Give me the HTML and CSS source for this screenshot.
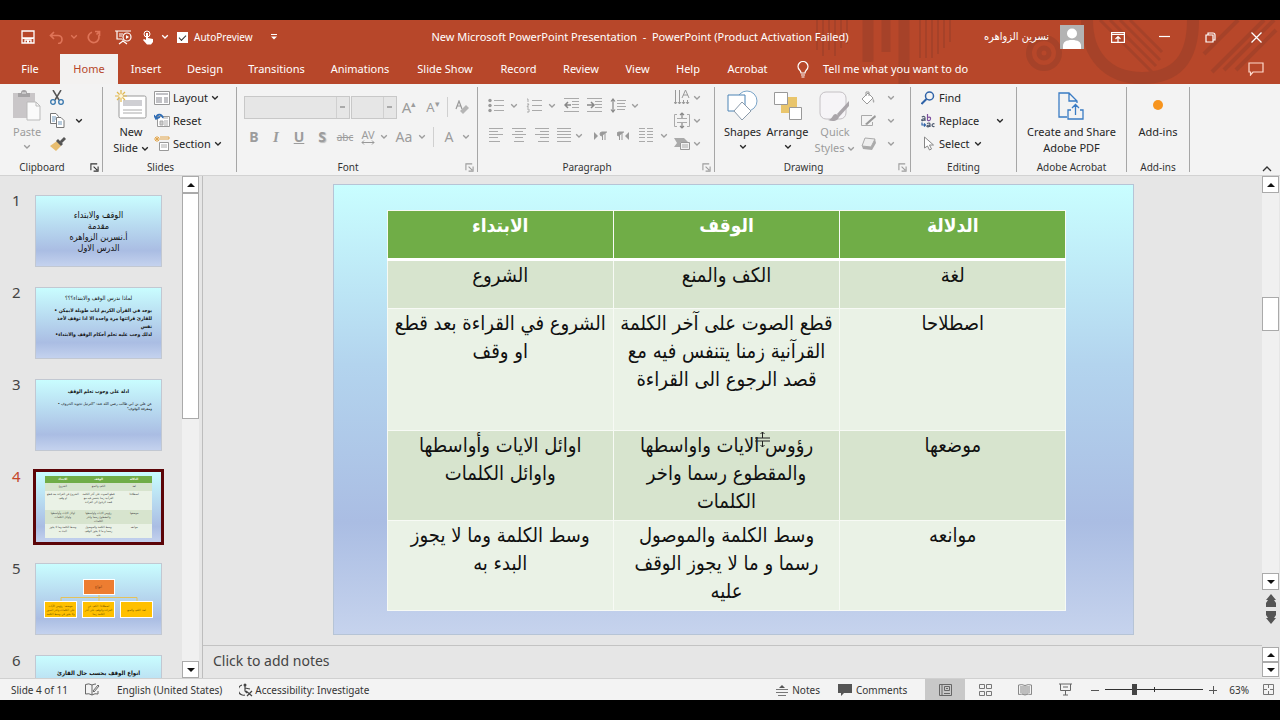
FILE: index.html
```html
<!DOCTYPE html>
<html lang="en">
<head>
<meta charset="utf-8">
<title>New Microsoft PowerPoint Presentation</title>
<link rel="stylesheet" href="styles.css">
</head>
<body>
<svg width="0" height="0" class="defs" aria-hidden="true">
  <symbol id="chev" viewBox="0 0 8 6"><path d="M1.2 1.2 4 4 6.800 1.200" fill="none" stroke="currentColor" stroke-width="1.300"/></symbol>
  <symbol id="launch" viewBox="0 0 10 10"><path d="M1 8V1h7M4 4l4 4M9 4v5H4" fill="none" stroke="currentColor" stroke-width="1.200"/></symbol>
  <symbol id="up" viewBox="0 0 8 4"><path d="M0 4 4 0l4 4z" fill="currentColor"/></symbol>
  <symbol id="down" viewBox="0 0 8 4"><path d="M0 0h8L4 4z" fill="currentColor"/></symbol>
</svg>

<header class="top">
  <svg class="art" viewBox="0 0 480 64" width="480" height="64" aria-hidden="true">
    <g fill="none" stroke="#9b4029">
      <path d="M17 0v30M23 0v36M29 0v30M35 0v36M41 0v28M47 0v24" stroke-width="2"/>
      <path d="M68 0v42M104 0v64" stroke-width="11"/><path d="M86 0v32" stroke-width="9"/>
      <path d="M120 0v38M126 0v38M132 0v38M138 0v34M144 0v28M150 0v22" stroke-width="2"/>
      <circle cx="244" cy="33" r="15" stroke-width="6"/><circle cx="244" cy="33" r="5" stroke-width="5"/>
      <path d="M287 0c0 35 20 58 55 58s51-20 51-58" stroke-width="12"/>
      <path d="m300 0 52 52M310 0l46 46M320 0l40 40M330 0l32 32" stroke-width="3"/>
      <path d="m404 34 34-34M412 52l52-52M424 50l50-50M436 50l40-40" stroke-width="4"/>
    </g>
  </svg>
  <div class="titlebar">
    <div class="qat">
      <button aria-label="Save"><svg width="14" height="14" viewBox="0 0 14 14"><path d="M1 1h12v12H1zM1 8h12M4 13v-3h6v3" fill="none" stroke="#fff" stroke-width="1.300"/><path d="M6 10h2v3H6zM2 8h10v1H2z" fill="#fff"/></svg></button>
      <button aria-label="Undo"><svg width="15" height="13" viewBox="0 0 15 13"><path d="M5 1 1.500 4.500 5 8M1.500 4.500H9a4 4 0 0 1 0 8" fill="none" stroke="#df7458" stroke-width="1.700"/></svg></button>
      <button aria-label="Undo list" class="dim"><svg width="8" height="6"><use href="#chev"/></svg></button>
      <button aria-label="Redo"><svg width="14" height="14" viewBox="0 0 14 14"><path d="M8 1.500h4.500V6M12 2 9.500 4.500M5 2.200a5.300 5.300 0 1 0 6.500 3" fill="none" stroke="#df7458" stroke-width="1.700"/></svg></button>
      <button aria-label="From beginning"><svg width="17" height="15" viewBox="0 0 17 15"><path d="M0 1h16M2 1v8h5M4 4h4M4 6h3M8 9v3M4 14l4-3 4 3" fill="none" stroke="#fff" stroke-width="1.200"/><circle cx="12" cy="7" r="4" fill="#b7472a" stroke="#fff" stroke-width="1.200"/><path d="m11 5 3 2-3 2z" fill="#fff"/></svg></button>
      <button aria-label="Touch mode"><svg width="13" height="15" viewBox="0 0 13 15"><circle cx="5" cy="4" r="3" fill="none" stroke="#fff"/><path d="M4 3h2v5l5 1v3l-2 2.500H5L1 10l1-1 2 1z" fill="#fff"/></svg></button>
      <button aria-label="Touch mode list"><svg width="8" height="6"><use href="#chev"/></svg></button>
      <label class="auto"><input type="checkbox" checked><span>AutoPreview</span></label>
      <button aria-label="Customize toolbar"><svg width="6" height="6" viewBox="0 0 6 6"><path d="M0 .5h6" stroke="#fff"/><path d="M0 2.500h6L3 5.500z" fill="#fff"/></svg></button>
    </div>
    <h1>New Microsoft PowerPoint Presentation&nbsp; -&nbsp; PowerPoint (Product Activation Failed)</h1>
    <div class="account">
      <span dir="rtl" lang="ar">نسرين الزواهره</span>
      <svg width="24" height="24" viewBox="0 0 24 24"><path d="M0 0h24v24H0z" fill="#b3b3b3"/><circle cx="12" cy="8.500" r="5" fill="#fff"/><path d="M3 24v-3c0-4 3-6 9-6s9 2 9 6v3z" fill="#fff"/></svg>
      <button aria-label="Ribbon display options"><svg width="14" height="11" viewBox="0 0 14 11"><path d="M.6.600h12.800v9.800H.6zM.6 2.500h12.800M7 10V5M4.500 7 7 4.500 9.500 7" fill="none" stroke="#fff" stroke-width="1.200"/></svg></button>
      <button aria-label="Minimize"><svg width="11" height="11" viewBox="0 0 11 11"><path d="M0 4.500h11" stroke="#fff" stroke-width="1.200"/></svg></button>
      <button aria-label="Restore"><svg width="11" height="11" viewBox="0 0 11 11"><path d="M1 3h7v7H1zM3 3V1h5q2 0 2 2v5H8" fill="none" stroke="#fff" stroke-width="1.200"/></svg></button>
      <button aria-label="Close"><svg width="11" height="11" viewBox="0 0 11 11"><path d="m.5.500 10 10m0-10-10 10" stroke="#fff" stroke-width="1.300"/></svg></button>
    </div>
  </div>
  <nav class="tabs">
    <button>File</button><button class="active">Home</button><button>Insert</button><button>Design</button><button>Transitions</button><button>Animations</button><button>Slide Show</button><button>Record</button><button>Review</button><button>View</button><button>Help</button><button>Acrobat</button>
    <button class="tell"><svg width="12" height="17" viewBox="0 0 12 17"><path d="M4 12c0-3-3-3-3-6.500a5 5 0 0 1 10 0C11 9 8 9 8 12zM4 14h4M4.500 16h3" fill="none" stroke="#fff" stroke-width="1.200"/></svg>Tell me what you want to do</button>
    <button class="cmt" aria-label="Comments"><svg width="16" height="14" viewBox="0 0 16 14"><path d="M1 1h14v9H5l-2.500 3v-3H1z" fill="none" stroke="#ffd9cc" stroke-width="1.200"/></svg></button>
  </nav>
</header>

<section class="ribbon">
  <div class="group g-clip">
    <div class="body">
      <button class="big off"><svg width="28" height="32" viewBox="0 0 28 32"><path d="M0 3h22v25H0z" fill="#c9c6c8"/><path d="M5 3h3q0-3 3-3t3 3h3v4H5z" fill="#a5a3a5"/><path d="M9 3h4" stroke="#eee"/><path d="M14 12h9l4 4v14H14z" fill="#fafafa" stroke="#bbb"/><path d="M23 12v4h4" fill="none" stroke="#bbb"/></svg><span>Paste</span><svg class="chev" width="8" height="6"><use href="#chev"/></svg></button>
      <div class="stack">
        <button aria-label="Cut"><svg width="14" height="15" viewBox="0 0 14 15"><path d="m3 0 6 10M11 0 5 10" stroke="#555" stroke-width="1.500"/><g fill="none" stroke="#3676ad" stroke-width="1.300"><circle cx="3" cy="12" r="2.300"/><circle cx="11" cy="12" r="2.300"/></g></svg></button>
        <button aria-label="Copy"><svg width="15" height="15" viewBox="0 0 15 15"><g fill="#fff" stroke="#777"><path d="M.5.500H6l2.500 3v7h-8z"/><path d="M6.500 4.500H11l3 3v7H6.500z"/></g><path d="M2 4h4M2 6h4M2 8h3M8 9h4M8 11h4" stroke="#6f96b9"/></svg></button>
        <button aria-label="Format painter"><svg width="16" height="14" viewBox="0 0 16 14"><path d="m0 9 7-5 4 5-5 5z" fill="#e7bd70"/><path d="m6 4 2-2 5 5-2 2zM10 4l4-4 2 2-4 4z" fill="#555"/></svg></button>
      </div>
      <button aria-label="Copy options"><svg width="8" height="6"><use href="#chev"/></svg></button>
    </div>
    <footer>Clipboard<svg class="launch" width="9" height="9"><use href="#launch"/></svg></footer>
  </div>

  <div class="group g-slides">
    <div class="body">
      <button class="big"><svg width="32" height="32" viewBox="0 0 32 32"><rect x="4" y="6" width="27" height="22" rx="1.500" fill="#fff" stroke="#999"/><path d="M8 10h19v6H8z" fill="#cfcfd3"/><path d="M8 20h19M8 23h19" stroke="#aaa"/><path d="M6 0v12M0 6h12M2 2l8 8M10 2l-8 8" stroke="#e3b94c" stroke-width="1.200"/><circle cx="6" cy="6" r="2" fill="#fff6d8"/></svg><span>New<br>Slide <svg width="8" height="6"><use href="#chev"/></svg></span></button>
      <div class="stack">
        <button><svg width="16" height="14" viewBox="0 0 16 14"><path d="M.5.500h15v13H.5z" fill="#fff" stroke="#999"/><path d="M2 2h12v2H2zM2 6h6v6H2zM10 6h4v6h-4z" fill="#c2c2c6"/></svg>Layout <svg width="8" height="6"><use href="#chev"/></svg></button>
        <button><svg width="16" height="15" viewBox="0 0 16 15"><path d="M3.500 3.500h12v10h-12z" fill="#fff" stroke="#999"/><path d="M9 5h5M6 8h3v4H6zM10 8h4M10 10h4M10 12h4" stroke="#aaa" fill="#ccc"/><path d="M9 5C8 1 3 0 2 5M0 2l2 4 4-2" fill="none" stroke="#2f6db5" stroke-width="1.600"/></svg>Reset</button>
        <button><svg width="16" height="15" viewBox="0 0 16 15"><path d="M5.500 6.500h9v8h-9z" fill="#fff" stroke="#999"/><path d="M7 9h6M7 11h6" stroke="#aaa"/><path d="M6 1h9v2H6M3 0v6M0 3h6M1 1l4 4M5 1 1 5" fill="none" stroke="#e2a64c"/></svg>Section <svg width="8" height="6"><use href="#chev"/></svg></button>
      </div>
    </div>
    <footer>Slides</footer>
  </div>

  <div class="group g-font off">
    <div class="body rows">
      <div class="frow1">
        <select aria-label="Font"><option></option></select>
        <select aria-label="Font size"><option></option></select>
        <button aria-label="Increase font size" class="ga">A<sup>▴</sup></button>
        <button aria-label="Decrease font size" class="ga sm">A<sup>▾</sup></button>
        <i class="sep"></i>
        <button aria-label="Clear formatting"><svg width="14" height="15" viewBox="0 0 14 15"><path d="m1 9 3-8 3 8M2 6h4" fill="none" stroke="#999" stroke-width="1.200"/><path d="m5 11 6-6 3 3-6 6z" fill="#b5b5b5"/></svg></button>
      </div>
      <div class="frow2">
        <button><b>B</b></button><button class="ital"><b>I</b></button><button><b><u>U</u></b></button><button class="shadow"><b>S</b></button><button class="abc"><s>abc</s></button>
        <button class="av" aria-label="Character spacing">AV<svg width="14" height="5" viewBox="0 0 14 5"><path d="M1 2.500h12M3 .5l-2 2 2 2M11 .5l2 2-2 2" fill="none" stroke="#999"/></svg></button>
        <svg width="8" height="6"><use href="#chev"/></svg><button>Aa</button><svg width="8" height="6"><use href="#chev"/></svg><i class="sep"></i><button class="fc">A</button><svg width="8" height="6"><use href="#chev"/></svg>
      </div>
    </div>
    <footer>Font<svg class="launch" width="9" height="9"><use href="#launch"/></svg></footer>
  </div>

  <div class="group g-para off">
    <div class="body">
      <div class="rows">
        <div class="prow1">
          <button aria-label="Bullets"><svg width="16" height="15" viewBox="0 0 16 15"><path d="M6 2.500h10M6 7.500h10M6 12.500h10" stroke="#aaa"/><g fill="#999"><circle cx="2" cy="2.500" r="1.700"/><circle cx="2" cy="7.500" r="1.700"/><circle cx="2" cy="12.500" r="1.700"/></g></svg></button><svg width="8" height="6"><use href="#chev"/></svg>
          <button aria-label="Numbering"><svg width="16" height="15" viewBox="0 0 16 15"><path d="M6 2.500h10M6 7.500h10M6 12.500h10M1 1h1v3M1 6h2l-2 3h2M1 11h2v3H1" fill="none" stroke="#aaa"/></svg></button><svg width="8" height="6"><use href="#chev"/></svg>
          <button aria-label="Decrease indent"><svg width="16" height="15" viewBox="0 0 16 15"><path d="M0 .5h15M8 3.500h7M8 6.500h7M8 9.500h7M0 13.500h15" stroke="#aaa"/><path d="M4 4 1 7l3 3M1 7h6" fill="none" stroke="#888" stroke-width="1.500"/></svg></button>
          <button aria-label="Increase indent"><svg width="16" height="15" viewBox="0 0 16 15"><path d="M0 .5h15M8 3.500h7M8 6.500h7M8 9.500h7M0 13.500h15" stroke="#aaa"/><path d="m4 4 3 3-3 3M0 7h6" fill="none" stroke="#888" stroke-width="1.500"/></svg></button>
          <button aria-label="Line spacing"><svg width="16" height="15" viewBox="0 0 16 15"><path d="M7 2.500h9M7 5.500h8M7 8.500h9M7 11.500h8" stroke="#aaa"/><path d="M3 1v13M1 3.500 3 1l2 2.500M1 11.500 3 14l2-2.500" fill="none" stroke="#888" stroke-width="1.200"/></svg></button><svg width="8" height="6"><use href="#chev"/></svg>
        </div>
        <div class="prow2">
          <button aria-label="Align left"><svg width="14" height="15" viewBox="0 0 14 15"><path d="M0 .5h14M0 3.500h9M0 6.500h14M0 9.500h9M0 13.500h11" stroke="#aaa"/></svg></button>
          <button aria-label="Center"><svg width="14" height="15" viewBox="0 0 14 15"><path d="M0 .5h14M3 3.500h8M0 6.500h14M3 9.500h8M2 13.500h10" stroke="#aaa"/></svg></button>
          <button aria-label="Align right"><svg width="14" height="15" viewBox="0 0 14 15"><path d="M0 .5h14M5 3.500h9M0 6.500h14M5 9.500h9M3 13.500h11" stroke="#aaa"/></svg></button>
          <button aria-label="Justify"><svg width="14" height="15" viewBox="0 0 14 15"><path d="M0 .5h14M0 3.500h14M0 6.500h14M0 9.500h14M0 13.500h14" stroke="#aaa"/></svg></button><svg width="8" height="6"><use href="#chev"/></svg>
          <button aria-label="Left to right"><svg width="13" height="10" viewBox="0 0 13 10"><path d="m0 1 4 4-4 4z" fill="#999"/><path d="M8.500 1v8M11 1v8M13 1H8a2 2 0 0 0 0 4" fill="#999" stroke="#999"/></svg></button>
          <button aria-label="Right to left"><svg width="13" height="10" viewBox="0 0 13 10"><path d="m12 1-4 4 4 4z" fill="#999"/><path d="M2.500 1v8M5 1v8M7 1H2a2 2 0 0 0 0 4" fill="#999" stroke="#999"/></svg></button>
          <button aria-label="Columns"><svg width="14" height="15" viewBox="0 0 14 15"><path d="M0 .5h6M8 .5h6M0 3.500h6M8 3.500h6M0 6.500h6M8 6.500h6M0 9.500h6M8 9.500h6M0 13.500h6M8 13.500h6" stroke="#aaa"/></svg></button><svg width="8" height="6"><use href="#chev"/></svg>
        </div>
      </div>
      <div class="pairs">
        <button aria-label="Text direction"><svg width="16" height="17" viewBox="0 0 16 17"><path d="M1.500 1v14M5.500 1v14M9.500 11v4M13.500 11v4M0 13l1.500 2L3 13M4 13l1.500 2L7 13M8 13l1.500 2 1.500-2M12 13l1.500 2 1.500-2M8 9l3.500-8L15 9M9 6h5" fill="none" stroke="#999"/></svg><svg width="8" height="6"><use href="#chev"/></svg></button>
        <button aria-label="Align text"><svg width="16" height="17" viewBox="0 0 16 17"><path d="M3 2.500H.5v12H3M13 2.500h2.500v12H13M3 6.500h10M3 10.500h10" fill="none" stroke="#aaa"/><path d="M8 1v5M8 11v5M6 3l2-2 2 2M6 14l2 2 2-2" fill="none" stroke="#888" stroke-width="1.200"/></svg><svg width="8" height="6"><use href="#chev"/></svg></button>
        <button aria-label="SmartArt"><svg width="16" height="14" viewBox="0 0 16 14"><path d="M0 1h10l4 4H6v5H0l3-4z" fill="#aaa"/><path d="M6.500 5.500h9v7h-9z" fill="#f2f2f2" stroke="#999"/><path d="M8 8h6M8 10h6" stroke="#aaa"/></svg><svg width="8" height="6"><use href="#chev"/></svg></button>
      </div>
    </div>
    <footer>Paragraph<svg class="launch" width="9" height="9"><use href="#launch"/></svg></footer>
  </div>

  <div class="group g-draw">
    <div class="body">
      <button class="big"><svg width="32" height="32" viewBox="0 0 32 32"><g fill="#fff"><circle cx="20" cy="11" r="10" stroke="#7aa5c9"/><path d="M1 5h17v16H1z" stroke="#4c84b5"/><path d="m15 12 9 9-9 9-8-9z" stroke="#8a9aaa"/></g></svg><span>Shapes</span><svg class="chev" width="8" height="6"><use href="#chev"/></svg></button>
      <button class="big"><svg width="30" height="32" viewBox="0 0 30 32"><path d="M8 7h16v16H8z" fill="#e9c56c"/><g fill="#fff" stroke="#999"><path d="M1.500 2.500h13v12h-13zM16.500 17.500h12v12h-12z"/></g></svg><span>Arrange</span><svg class="chev" width="8" height="6"><use href="#chev"/></svg></button>
      <button class="big off"><svg width="32" height="32" viewBox="0 0 32 32"><rect x="1" y="2" width="26" height="27" rx="6" fill="#f6f4f7" stroke="#c4c0c4"/><path d="m30 11-12 13 2 3 10-11z" fill="#aaa5aa"/><path d="M17 24c-4 0-3 5-8 6 5 2 11 1 11-4z" fill="#aaa5aa"/></svg><span>Quick<br>Styles <svg width="8" height="6"><use href="#chev"/></svg></span></button>
      <div class="pairs off">
        <button aria-label="Shape fill"><svg width="14" height="14" viewBox="0 0 14 14"><path d="m1 8 6-6 5 5-6 6zM5 5V1h3v4" fill="#fff" stroke="#999"/><path d="M12 7q2 3 1 5-2-1-1-5" fill="#aaa"/></svg><svg width="8" height="6"><use href="#chev"/></svg></button>
        <button aria-label="Shape outline"><svg width="16" height="14" viewBox="0 0 16 14"><path d="M11 1.500H.5v10h11V8" fill="none" stroke="#aaa"/><path d="m4 10 10-9 1 2-9 8z" fill="#999"/></svg><svg width="8" height="6"><use href="#chev"/></svg></button>
        <button aria-label="Shape effects"><svg width="16" height="14" viewBox="0 0 16 14"><path d="m4 1 10 1-4 8-9-1z" fill="#eee" stroke="#aaa"/><path d="m1 9 9 1 4-8 1 4-4 7-9-1z" fill="#aaa"/></svg><svg width="8" height="6"><use href="#chev"/></svg></button>
      </div>
    </div>
    <footer>Drawing<svg class="launch dimmed" width="9" height="9"><use href="#launch"/></svg></footer>
  </div>

  <div class="group g-edit">
    <div class="body">
      <div class="stack">
        <button><svg width="14" height="14" viewBox="0 0 14 14"><circle cx="8.500" cy="5" r="4" fill="none" stroke="#2f63a8" stroke-width="1.500"/><path d="m5.500 8-5 5" stroke="#2f63a8" stroke-width="2"/></svg>Find</button>
        <button><svg width="14" height="14" viewBox="0 0 14 14"><g fill="none" stroke="#4d5a70" stroke-width="1.200"><path d="M.8 3Q4 1.500 4 4v3M4 4.500C0 4.500 0 7 2 6.500L4 5.500"/><path d="M6.500 0v6.500M6.500 3.500q3.500-1 3 1.500t-3 1.200" stroke="#7d4f9e"/><path d="M1 8.500v2.500h3M3 9.500 4.500 11 3 12.500" stroke="#2f63a8"/><path d="M6 9.500q3-1.300 3 .8V13M9 11c-4 0-3.500 2-2 1.800L9 12M13.500 10C10.500 8.500 10 13.500 13.500 12.500"/></g></svg>Replace</button>
        <button><svg width="14" height="15" viewBox="0 0 14 15"><path d="M3.500 1v11l3-2 2 4 2-1-2-4h4z" fill="#fff" stroke="#888"/></svg>Select <svg width="8" height="6"><use href="#chev"/></svg></button>
      </div>
      <button aria-label="Replace options"><svg width="8" height="6"><use href="#chev"/></svg></button>
    </div>
    <footer>Editing</footer>
  </div>

  <div class="group g-pdf">
    <div class="body"><button class="big"><svg width="26" height="32" viewBox="0 0 26 32"><path d="M9 27H1V3h10l8 8v2M11 3v8h8M13 20h-3v9h15v-9h-3M17.500 25V15M14 18l3.500-3.500L21 18" fill="none" stroke="#3a7cc4" stroke-width="1.300"/></svg><span>Create and Share<br>Adobe PDF</span></button></div>
    <footer>Adobe Acrobat</footer>
  </div>
  <div class="group g-add">
    <div class="body"><button class="big"><svg width="26" height="32" viewBox="0 0 26 32"><circle cx="13" cy="15" r="5" fill="#f7941d"/></svg><span>Add-ins</span></button></div>
    <footer>Add-ins</footer>
  </div>
  <button class="collapse" aria-label="Collapse ribbon"><svg width="10" height="6" viewBox="0 0 10 6"><path d="m1 5 4-4 4 4" fill="none" stroke="#333" stroke-width="1.300"/></svg></button>
</section>

<main class="work">
  <aside class="thumbs">
    <div class="item"><span>1</span><div class="thumb t1" dir="rtl" lang="ar">الوقف والابتداء<br>مقدمة<br>أ.نسرين الزواهره<br>الدرس الاول</div></div>
    <div class="item"><span>2</span><div class="thumb t2" dir="rtl" lang="ar"><h3>لماذا ندرس الوقف والابتداء؟؟؟</h3><ul><li>يوجد في القرآن الكريم ايات طويلة لايمكن •<br>للقارئ قرائتها مرة واحدة الا اذا توقف لأخذ<br>نفس</li><li>لذلك وجب عليه تعلم أحكام الوقف والابتداء•</li></ul></div></div>
    <div class="item"><span>3</span><div class="thumb t3" dir="rtl" lang="ar"><h3>ادلة على وجوب تعلم الوقف</h3><ul><li>عن علي بن ابي طالب رضي الله عنه: "الترتيل تجويد الحروف •<br>ومعرفة الوقوف"</li></ul></div></div>
    <div class="item on"><span>4</span><div class="thumb t4" dir="rtl" lang="ar">
      <table class="mini">
        <tr><th>الدلالة</th><th>الوقف</th><th>الابتداء</th></tr>
        <tr><td>لغة</td><td>الكف والمنع</td><td>الشروع</td></tr>
        <tr><td>اصطلاحا</td><td>قطع الصوت على آخر الكلمة<br>القرآنية زمنا يتنفس فيه مع<br>قصد الرجوع الى القراءة</td><td>الشروع في القراءة بعد قطع<br>او وقف</td></tr>
        <tr><td>موضعها</td><td>رؤوس الايات واواسطها<br>والمقطوع رسما واخر<br>الكلمات</td><td>اوائل الايات وأواسطها<br>واوائل الكلمات</td></tr>
        <tr><td>موانعه</td><td>وسط الكلمة والموصول<br>رسما و ما لا يجوز الوقف<br>عليه</td><td>وسط الكلمة وما لا يجوز<br>البدء به</td></tr>
      </table></div></div>
    <div class="item"><span>5</span><div class="thumb t5" dir="rtl" lang="ar">
      <div class="root">انواع</div>
      <svg width="78" height="6" viewBox="0 0 78 6"><path d="M1 6V2.500h76V6M39 0v6" fill="none" stroke="#e3c25b"/></svg>
      <div class="leaves"><div>لغة: الكف والمنع</div><div>اصطلاحا: الكف عن<br>القراءة والوقف على آخر<br>الكلمة زمنا</div><div>موضعه: رؤوس الآيات<br>على الكلمات واخر السور<br>ولا يجوز في وسط الكلمة</div></div></div></div>
    <div class="item"><span>6</span><div class="thumb t6" dir="rtl" lang="ar">انواع الوقف بحسب حال القارئ</div></div>
  </aside>
  <div class="vbar side"><button aria-label="Scroll up"><svg width="8" height="4"><use href="#up"/></svg></button><i></i><button class="end" aria-label="Scroll down"><svg width="8" height="4"><use href="#down"/></svg></button></div>

  <section class="editor">
    <div class="stage">
      <div class="slide" dir="rtl" lang="ar">
        <table class="main">
          <tr class="r1"><th>الدلالة</th><th>الوقف</th><th>الابتداء</th></tr>
          <tr class="r1"><td>لغة</td><td>الكف والمنع</td><td>الشروع</td></tr>
          <tr class="r3"><td>اصطلاحا</td><td>قطع الصوت على آخر الكلمة<br>القرآنية زمنا يتنفس فيه مع<br>قصد الرجوع الى القراءة</td><td>الشروع في القراءة بعد قطع<br>او وقف</td></tr>
          <tr class="r2"><td>موضعها</td><td>رؤوس الايات واواسطها<br>والمقطوع رسما واخر<br>الكلمات</td><td>اوائل الايات وأواسطها<br>واوائل الكلمات</td></tr>
          <tr class="r2"><td>موانعه</td><td>وسط الكلمة والموصول<br>رسما و ما لا يجوز الوقف<br>عليه</td><td>وسط الكلمة وما لا يجوز<br>البدء به</td></tr>
        </table>
        <svg class="cursor" width="15" height="17" viewBox="0 0 15 17" aria-hidden="true"><path d="M0 7h15M0 10h15M7.500 1v6M7.500 10v6M5.500 3l2-2 2 2M5.500 14l2 2 2-2" fill="none" stroke="#222"/></svg>
      </div>
    </div>
    <div class="notes">Click to add notes</div>
  </section>
  <div class="rightbars">
    <div class="vbar doc"><button aria-label="Scroll up"><svg width="8" height="4"><use href="#up"/></svg></button><i></i><button class="end" aria-label="Scroll down"><svg width="8" height="4"><use href="#down"/></svg></button></div>
    <div class="jump">
      <button aria-label="Previous slide"><svg width="10" height="13" viewBox="0 0 10 13"><path d="m5 0 5 6H8l2 3v4H0V9l2-3H0z" fill="#555"/></svg></button>
      <button aria-label="Next slide"><svg width="10" height="13" viewBox="0 0 10 13"><path d="m5 13 5-6H8l2-3V0H0v4l2 3H0z" fill="#555"/></svg></button>
    </div>
    <div class="vbar nb"><button aria-label="Notes up"><svg width="8" height="4"><use href="#up"/></svg></button><button aria-label="Notes down"><svg width="8" height="4"><use href="#down"/></svg></button></div>
  </div>
</main>

<footer class="status">
  <div class="left">
    <span>Slide 4 of 11</span>
    <svg width="15" height="13" viewBox="0 0 15 13"><path d="M7 2v10M7 2Q4 0 .5 1.500V11Q4 10 7 12q3-2 6-1V8M7 2q2-1 4-1M8 8l5-6 1 1-5 6z" fill="none" stroke="#666"/></svg>
    <span>English (United States)</span>
    <button><svg width="14" height="14" viewBox="0 0 14 14"><circle cx="6" cy="2" r="1.500" fill="#444"/><path d="M3 2a5 5 0 0 0 3 10M6 3v5l2 2M6 5l5 1M7 8l6 5M13 8l-5 5" fill="none" stroke="#444" stroke-width="1.200"/></svg>Accessibility: Investigate</button>
  </div>
  <div class="right">
    <button><svg width="12" height="12" viewBox="0 0 12 12"><path d="M0 5.500h12M0 8.500h12M2 11.500h8" stroke="#777"/><path d="m3 4 3-3 3 3z" fill="#555"/></svg>Notes</button>
    <button><svg width="14" height="12" viewBox="0 0 14 12"><path d="M0 0h14v9H6l-3 3V9H0z" fill="#555"/></svg>Comments</button>
    <button class="view on" aria-label="Normal"><svg width="13" height="12" viewBox="0 0 13 12"><path d="M.5.500h12v11H.5zM3 .5v11M5.500 2.500h5v4h-5zM5 9.500h6M7 4.500h2" fill="none" stroke="#666"/></svg></button>
    <button class="view" aria-label="Slide sorter"><svg width="13" height="12" viewBox="0 0 13 12"><path d="M.5.500h5v4h-5zM7.500.500h5v4h-5zM.5 7.500h5v4h-5zM7.500 7.500h5v4h-5z" fill="none" stroke="#777"/></svg></button>
    <button class="view" aria-label="Reading view"><svg width="14" height="12" viewBox="0 0 14 12"><path d="M7 1.500Q4 0 .5 1v9.500Q4 9.500 7 11q3-1.500 6.500-.5V1Q10 0 7 1.500V11M3 2v7M5 2v8M9 2v8M11 2v7" fill="none" stroke="#888"/></svg></button>
    <button class="view" aria-label="Slide show"><svg width="13" height="13" viewBox="0 0 13 13"><path d="M0 1h13M1.500 1v6.500h10V1M6.500 8v4M4 12h5M4 4h5" fill="none" stroke="#666"/></svg></button>
    <button aria-label="Zoom out"><svg width="8" height="8" viewBox="0 0 8 8"><path d="M0 4.500h8" stroke="#555"/></svg></button>
    <input type="range" aria-label="Zoom" min="0" max="100" value="29">
    <button aria-label="Zoom in"><svg width="8" height="8" viewBox="0 0 8 8"><path d="M0 4.500h8M4.500 0v8" stroke="#555"/></svg></button>
    <span class="pct">63%</span>
    <button aria-label="Fit slide"><svg width="11" height="11" viewBox="0 0 11 11"><path d="M.5.500h10v10H.5zM5.500 1v3M5.500 7v3M1 5.500h3M7 5.500h3" fill="none" stroke="#777"/></svg></button>
  </div>
</footer>
</body>
</html>
```
FILE: styles.css
```css
* { box-sizing: border-box; }
body {
  margin: 0;
  height: 100vh;
  padding: 20px 0;
  background: #000;
  display: flex;
  flex-direction: column;
  font: 11px/16px "Noto Sans", "Open Sans", sans-serif;
  color: #262626;
  overflow: hidden;
}
[lang="ar"] { font-family: "DejaVu Sans Condensed", "DejaVu Sans", sans-serif; }
.defs { position: absolute; }
button { border: 0; background: none; padding: 0; margin: 0; font: inherit; color: inherit; display: flex; align-items: center; justify-content: center; white-space: nowrap; }
svg { flex: none; }
.off { color: #9c9c9c; }

/* title bar and tabs */
.top { background: #b7472a; color: #fff; position: relative; flex: none; }
.art { position: absolute; top: 0; right: 0; opacity: .6; }
.titlebar { position: relative; height: 34px; display: grid; grid-template-columns: 1fr auto 1fr; align-items: center; }
.titlebar h1 { margin: 0; font-size: 11px; font-weight: 400; white-space: nowrap; }
.qat { display: grid; grid-template-columns: 24px 32px 4px 36px 22px 28px 6px 98px 16px; padding-left: 16px; align-items: center; }
.qat .dim { color: #df7458; }
.auto { display: flex; align-items: center; gap: 6px; padding-left: 9px; font-size: 10px; }
.auto input { margin: 0; width: 11px; height: 11px; appearance: none; background: #fff; display: grid; place-items: center; }
.auto input::after { content: ""; width: 6px; height: 3px; border: solid #333; border-width: 0 0 1px 1px; transform: rotate(-45deg); }
.account { display: flex; align-items: center; justify-content: flex-end; padding-right: 1px; font-size: 11px; }
.account > svg { margin: 0 11px; }
.account button { width: 46px; }
.tabs { position: relative; height: 30px; display: grid; grid-template-columns: 60px 58px 56px 62px 81px 86px 84px 63px 62px 51px 50px 69px 192px 1fr; }
.tabs .active { background: #f3f2f1; color: #b7472a; }
.tabs .tell { gap: 14px; justify-content: flex-start; padding-left: 15px; }
.tabs .cmt { justify-content: flex-end; padding-right: 16px; }

/* ribbon */
.ribbon { flex: none; height: 92px; background: #f3f3f3; display: flex; border-bottom: 1px solid #d2d2d2; position: relative; padding: 3px 0; }
.group { display: grid; grid-template-rows: minmax(0, 1fr) 10px; border-right: 1px solid #a6a6a6; flex: none; }
.group .body { display: flex; align-items: center; padding-bottom: 8px; min-height: 0; }
.group footer { font-size: 10px; line-height: 10px; text-align: center; color: #333; position: relative; }
.launch { position: absolute; right: 3px; top: 1px; }
.off .launch, .dimmed { color: #9c9c9c; }
.g-clip { width: 103px; }
.g-slides { width: 134px; }
.g-font { width: 241px; }
.g-para { width: 237px; }
.g-draw { width: 196px; }
.g-edit { width: 106px; }
.g-pdf { width: 110px; }
.g-add { width: 63px; }
.group footer { padding-right: 18px; }
.g-edit footer, .g-pdf footer, .g-add footer { padding: 0; }
.big { flex-direction: column; justify-content: flex-start; align-self: flex-start; padding-top: 3px; line-height: 16px; }
.big > svg:first-child { margin-bottom: 2px; }
.big .chev { margin-top: 4px; }
.stack { display: flex; flex-direction: column; }
.stack button { height: 23px; gap: 3px; justify-content: flex-start; }
.g-clip .body { padding-left: 13px; gap: 9px; }
.g-slides .body { padding-left: 9px; gap: 4px; }
.g-slides .big { width: 38px; }
.rows { display: grid; grid-template-rows: 30px 30px; align-content: center; }
.rows > div, .frow1, .frow2 { display: grid; align-items: center; justify-items: center; }
.group .rows.body { display: grid; align-items: stretch; padding-left: 7px; padding-bottom: 5px; }
.frow1 { grid-template-columns: 106px 1px 46px 24px 24px 4px 26px; }
.frow1 select:nth-child(2) { grid-column: 3; }
.frow1 select { width: 100%; height: 23px; border: 1px solid #c8c8c8; background: conic-gradient(from -45deg at 50% 100%, #aaa 90deg, transparent 0) right 4px center / 5px 3px no-repeat, linear-gradient(#d0d0d0, #d0d0d0) right 12px center / 1px 100% no-repeat #e6e6e6; border-radius: 0; appearance: none; }
.frow1 select { background: linear-gradient(#aaa, #aaa) right 4px center / 5px 2px no-repeat, linear-gradient(#d0d0d0, #d0d0d0) right 12px center / 1px 100% no-repeat #e6e6e6; }
.ga { font-size: 15px; }
.ga sup { font-size: 9px; align-self: flex-start; line-height: 10px; }
.ga.sm { font-size: 13px; }
.sep { width: 1px; height: 20px; background: #d0d0d0; }
.frow2 { grid-template-columns: 20px 24px 22px 24px 22px 24px 8px 32px 4px 18px 14px 20px; font-size: 14px; }
.ital { font-family: "Liberation Serif", serif; font-style: italic; font-size: 15px; }
.shadow { text-shadow: 1px 1px 1px #bbb; }
.abc { font-size: 10px; }
.av { flex-direction: column; font-size: 11px; line-height: 11px; }
.g-para .body { padding-left: 7px; }
.prow1 { grid-template-columns: 22px 14px 26px 10px 30px 16px 30px 4px; }
.prow2 { grid-template-columns: 22px 24px 22px 22px 8px 34px 12px 34px 2px; }
.pairs { display: flex; flex-direction: column; margin-left: auto; padding-right: 13px; }
.pairs button { height: 23px; justify-content: space-between; width: 27px; }
.g-draw .body { padding-left: 5px; }
.g-draw .big { width: 45px; }
.g-draw .big.off { width: 50px; }
.g-draw .pairs { padding-right: 15px; }
.g-draw .pairs button { width: 34px; }
.g-edit .body { padding-left: 10px; gap: 14px; }
.g-edit .stack button { gap: 4px; }
.g-pdf .body, .g-add .body { justify-content: center; }
.collapse { position: absolute; right: 8px; bottom: 3px; }

/* workspace */
.work { flex: 1; min-height: 0; background: #e6e6e6; display: flex; }
.thumbs { width: 182px; flex: none; overflow: hidden; padding-top: 19px; }
.item { display: flex; height: 92px; padding-left: 12px; }
.item > span { width: 23px; font-size: 15px; line-height: 10px; color: #444; }
.item.on > span { color: #c4472a; }
.thumb { width: 127px; height: 72px; border: 1px solid #c2c8d2; background: linear-gradient(#c9fdff, #aabde3 78%, #c4d2ee); color: #111; text-align: center; overflow: hidden; white-space: nowrap; }
.thumb h3 { margin: 0; font-weight: 400; }
.thumb ul { margin: 0; padding: 0; list-style: none; text-align: right; }
.t1 { font-size: 9px; line-height: 11px; padding-top: 14px; }
.t2 { font-size: 5px; line-height: 8px; padding: 6px 9px; font-weight: 700; }
.t2 h3 { margin-bottom: 4px; }
.t3 { font-size: 4px; line-height: 5px; padding: 6px 9px; }
.t3 h3 { font-size: 5px; line-height: 10px; margin-bottom: 5px; font-weight: 700; }
.item.on .thumb { outline: 3px solid #5c0508; outline-offset: -1px; border-color: #fff; padding: 4px 9px; }
.mini { border-collapse: collapse; width: 100%; table-layout: fixed; font-size: 3px; line-height: 4px; }
.mini td, .mini th { padding: 1px 0; vertical-align: top; border: 0; }
.mini th { background: #70ad47; color: #fff; height: 7px; }
.mini td { background: #eaf2e6; color: #444; height: 8px; }
.mini tr:nth-child(even) td { background: #d7e4ce; }
.mini tr:nth-child(3) td { height: 19px; }
.mini tr:nth-child(n+4) td { height: 14px; }
.t5 { padding: 15px 8px 0; font-size: 4px; line-height: 4px; display: flex; flex-direction: column; align-items: center; }
.root { width: 32px; height: 16px; border: 1px solid #fff; background: #ed7d31; line-height: 14px; color: #7d3a10; }
.leaves { display: flex; gap: 5px; font-size: 3px; }
.leaves div { width: 33px; height: 17px; border: 1px solid #fff; background: #ffc000; display: flex; align-items: center; justify-content: center; color: #6b5000; }
.t6 { font-size: 6px; font-weight: 700; line-height: 10px; padding-top: 12px; }
.vbar { width: 17px; background: #f0f0f0; display: flex; flex-direction: column; flex: none; color: #111; }
.vbar button { height: 17px; flex: none; background: #fff; border: 1px solid #aaa; }
.vbar i { background: #fff; border: 1px solid #aaa; }
.vbar .end { margin-top: auto; }
.side i { height: 226px; }
.editor { flex: 1; min-width: 0; margin-left: 3px; border-left: 1px solid #bdbdbd; display: flex; flex-direction: column; }
.stage { flex: 1; min-height: 0; padding: 8px 0 10px 2px; display: flex; justify-content: center; }
.slide { height: 100%; aspect-ratio: 16 / 9; background: linear-gradient(#c9feff, #b3d4ee 40%, #aabde3 75%, #c6d3ed); border: 1px solid #b6c4d6; padding: 25px 67px 0 53px; position: relative; color: #111; }
.notes { height: 33px; flex: none; border-top: 1px solid #c3c3c3; padding-left: 10px; font-size: 14px; line-height: 30px; color: #444; }
.main { width: 100%; border-collapse: collapse; table-layout: fixed; font-size: 20px; line-height: 28px; text-align: center; }
.main th, .main td { padding: 0; vertical-align: top; white-space: nowrap; border: 1px solid #f7faf5; font-weight: 400; }
.main th { background: #70ad47; color: #fff; font-size: 19px; font-weight: 700; border-bottom: 3px solid #fff; }
.main td { background: #eaf2e6; }
.main tr:nth-child(2) td, .main tr:nth-child(4) td { background: #d7e4ce; }
.r1 { height: 49px; }
.r2 { height: 90px; }
.r3 { height: 122px; }
.cursor { position: absolute; left: 421px; top: 246px; }
.rightbars { width: 18px; display: flex; flex-direction: column; }
.doc { flex: 1; }
.doc i { height: 34px; margin-top: 104px; }
.jump { height: 57px; display: flex; flex-direction: column; gap: 4px; padding-top: 4px; width: 17px; }
.nb button { height: 15px; }
.nb { padding-bottom: 1px; }

/* status bar */
.status { flex: none; height: 22px; background: #f3f3f3; border-top: 1px solid #d0d0d0; display: flex; justify-content: space-between; font-size: 10px; color: #333; }
.status .left, .status .right, .status button { display: flex; align-items: center; }
.status .left { padding-left: 11px; gap: 17px; }
.status .left button { gap: 2px; }
.status button { gap: 4px; }
.status .right > button:nth-child(2) { margin: 0 18px; }
.status .view { width: 40px; align-self: stretch; }
.status .view.on { background: #c8c8c8; }
.status input { appearance: none; width: 98px; height: 16px; margin: 0 6px; background: linear-gradient(#333, #333) center / 100% 1px no-repeat, linear-gradient(#333, #333) center / 1px 5px no-repeat; }
.status input::-webkit-slider-thumb { appearance: none; width: 5px; height: 11px; background: #444; }
.status .view + button[aria-label="Zoom out"] { margin-left: 6px; }
.pct { margin: 0 14px 0 12px; }
.status .right { padding-right: 6px; }
```
